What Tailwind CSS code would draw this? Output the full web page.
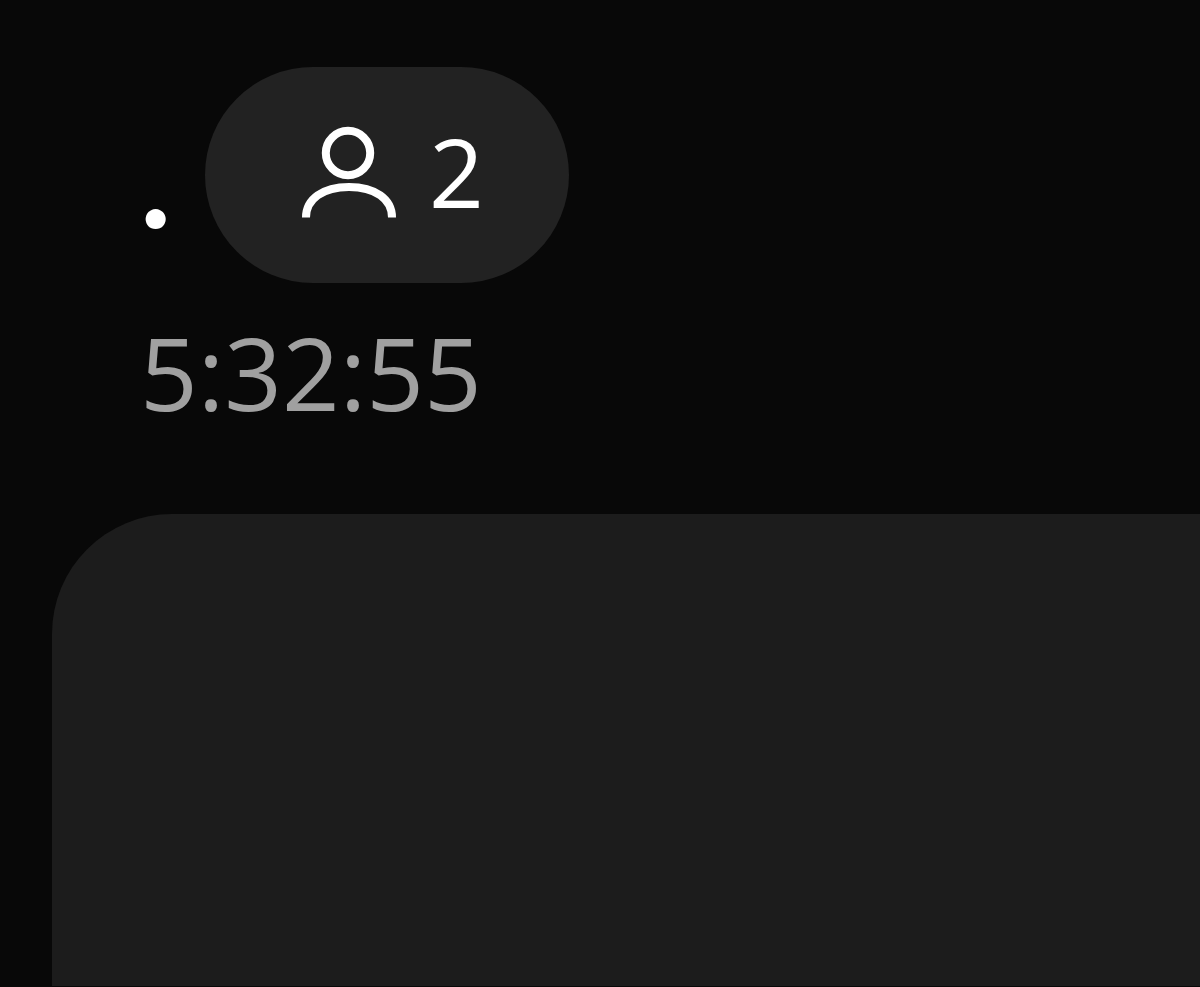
<!DOCTYPE html>
<html lang="en">
<head>
  <meta charset="UTF-8" />
  <title>Voice Room</title>
  <meta name="viewport" content="width=device-width, initial-scale=1.0"/>
  <script src="https://cdn.jsdelivr.net/npm/@tailwindcss/browser@4"></script>
</head>
<body class="bg-[#080808] text-white font-['Open_Sans','Noto_Sans',sans-serif] min-h-screen flex flex-col pb-px">
  <header class="pt-[67px] pl-[140px] pb-[84px]">
    <div class="flex items-center gap-8">
      <h1 class="w-[33px] pt-1 font-['Lato',sans-serif] text-[132px] leading-none font-bold">.</h1>
      <!-- participant count -->
      <button type="button" aria-label="2 participants" class="flex items-center gap-8 h-[216px] pl-24 pr-[85px] rounded-full bg-[#222222]">
        <svg class="w-24 h-24 overflow-visible" viewBox="0 0 96 96" fill="none" stroke="currentColor" stroke-width="8" aria-hidden="true">
          <circle cx="47" cy="26" r="22.2" />
          <path d="M5 90.5C5 72 22 60 48 60S91 72 91 90.5" />
        </svg>
        <span class="pb-2 text-[96px] leading-none">2</span>
      </button>
    </div>
    <p class="mt-8 text-[101px] leading-[115px] text-[#a0a0a0]">5:32:55</p>
  </header>
  <main class="flex-1 ml-[52px] rounded-tl-[120px] bg-[#1c1c1c]"></main>
</body>
</html>
